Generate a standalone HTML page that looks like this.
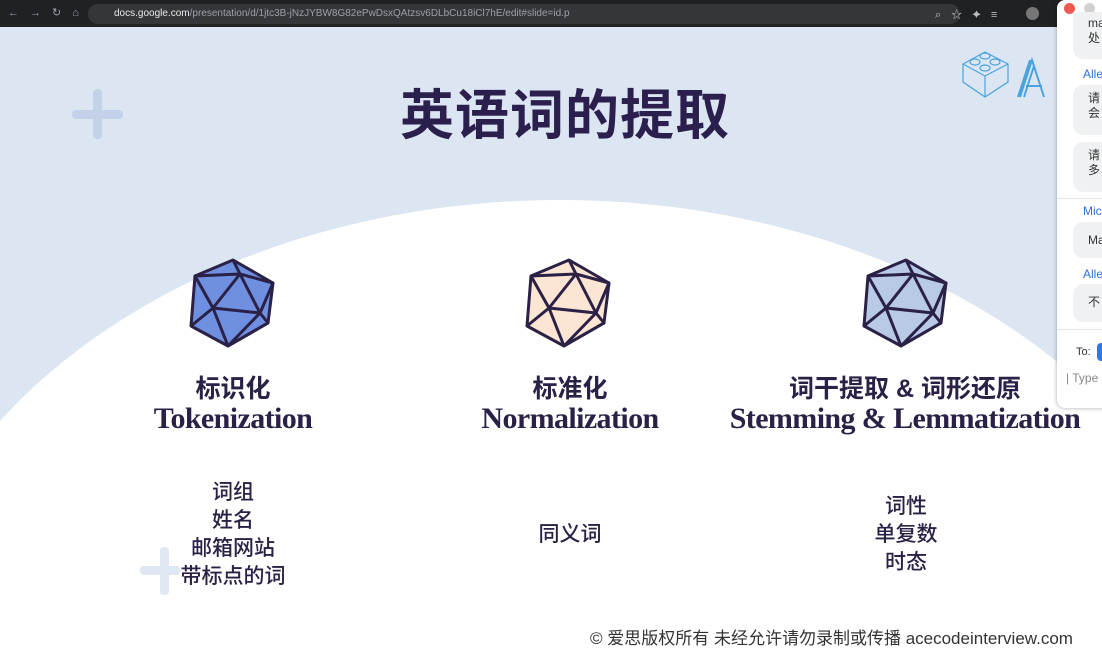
<!DOCTYPE html>
<html><head><meta charset="utf-8"><style>
*{margin:0;padding:0;box-sizing:border-box}
body{width:1102px;height:657px;overflow:hidden;position:relative;background:#fff;font-family:"Liberation Sans","Noto Sans CJK SC",sans-serif}
.bar{position:absolute;left:0;top:0;width:1102px;height:27px;background:#202124}
.url{position:absolute;left:88px;top:4px;width:872px;height:20px;border-radius:10px;background:#35363a;color:#9aa0a6;font-size:10px;line-height:20px;padding-left:26px;white-space:nowrap}
.url b{color:#e8eaed;font-weight:normal}
.slide{position:absolute;left:0;top:27px;width:1102px;height:630px;background:#dce6f3;overflow:hidden}
.arc{position:absolute;left:-115px;top:173px;width:1350px;height:1000px;border-radius:50%;background:#fff}
.t{position:absolute;color:#2b2146;text-align:center;font-family:"Liberation Sans","Noto Sans CJK SC",sans-serif;white-space:nowrap}
.en{font-family:"Liberation Serif","Noto Serif CJK SC",serif;font-weight:bold;font-size:30px;letter-spacing:-0.6px}
.cn{font-size:25px;font-weight:bold}
.sub{font-size:21px;line-height:28px;color:#2b2146;font-weight:500}
.chat{position:absolute;left:1057px;top:0;width:60px;height:408px;background:#fff;border-radius:8px 0 0 8px;box-shadow:0 0 4px rgba(0,0,0,.35);font-size:12px;overflow:hidden}
.bub{position:absolute;left:16px;width:60px;background:#f0f1f3;border-radius:10px;font-size:12px;color:#333;padding:6px 0 0 15px;line-height:15px}
.nm{position:absolute;left:26px;color:#2f6fd8;font-size:12px}
</style></head><body>
<div class="bar"><div style="position:absolute;left:8px;top:6px;color:#9aa0a6;font-size:11px;letter-spacing:11px">←→↻⌂</div>
<div class="url"><b>docs.google.com</b>/presentation/d/1jtc3B-jNzJYBW8G82ePwDsxQAtzsv6DLbCu18iCl7hE/edit#slide=id.p</div>
<div style="position:absolute;left:935px;top:6px;color:#bbb;font-size:11px;letter-spacing:10px">⌕☆✦≡</div>
<div style="position:absolute;left:1026px;top:7px;width:13px;height:13px;border-radius:50%;background:#777"></div></div>
<div class="slide">
<div class="arc"></div>
<div style="position:absolute;left:93px;top:62px;width:9px;height:50px;background:#c3d2e8;border-radius:4px"></div>
<div style="position:absolute;left:72px;top:83px;width:51px;height:9px;background:#c3d2e8;border-radius:4px"></div>
<div style="position:absolute;left:160px;top:520px;width:9px;height:48px;background:#dfe7f2;border-radius:4px"></div>
<div style="position:absolute;left:140px;top:539px;width:40px;height:9px;background:#dfe7f2;border-radius:4px"></div>
<svg style="position:absolute;left:960px;top:15px" width="90" height="60" viewBox="0 0 90 60" fill="none" stroke="#4aa3df" stroke-width="1.2"><path d="M3 22 L25 10 L48 22 L48 40 L25 55 L3 40Z M3 22 L25 34 L48 22 M25 34 L25 55"/><ellipse cx="25" cy="14" rx="5" ry="3"/><ellipse cx="15" cy="20" rx="5" ry="3"/><ellipse cx="35" cy="20" rx="5" ry="3"/><ellipse cx="25" cy="26" rx="5" ry="3"/><path d="M60 55 L72 18 L84 55 M58 55 L70 18 M64 55 L74 24 M66 44 L82 44" stroke-width="2"/></svg>
<div class="t" style="left:300px;top:44px;width:530px;font-size:54px;font-weight:bold;letter-spacing:1px;color:#2b1f4d">英语词的提取</div>

<svg style="position:absolute;left:188px;top:231px" width="92" height="92" viewBox="0 0 92 92"><g stroke="#2b2146" stroke-width="3" stroke-linejoin="round" fill="#6f8fe0"><path d="M45 2 L85 25 L80 65 L40 88 L3 68 L7 18Z"/><path fill="none" d="M52 16 L25 50 L72 55Z M45 2 L52 16 L85 25 L72 55 L80 65 L40 88 L72 55 M40 88 L25 50 L3 68 M25 50 L7 18 L52 16"/></g></svg>
<svg style="position:absolute;left:524px;top:231px" width="92" height="92" viewBox="0 0 92 92"><g stroke="#2b2146" stroke-width="3" stroke-linejoin="round" fill="#fce5d3"><path d="M45 2 L85 25 L80 65 L40 88 L3 68 L7 18Z"/><path fill="none" d="M52 16 L25 50 L72 55Z M45 2 L52 16 L85 25 L72 55 L80 65 L40 88 L72 55 M40 88 L25 50 L3 68 M25 50 L7 18 L52 16"/></g></svg>
<svg style="position:absolute;left:861px;top:231px" width="92" height="92" viewBox="0 0 92 92"><g stroke="#2b2146" stroke-width="3" stroke-linejoin="round" fill="#b8cae6"><path d="M45 2 L85 25 L80 65 L40 88 L3 68 L7 18Z"/><path fill="none" d="M52 16 L25 50 L72 55Z M45 2 L52 16 L85 25 L72 55 L80 65 L40 88 L72 55 M40 88 L25 50 L3 68 M25 50 L7 18 L52 16"/></g></svg>

<div class="t cn" style="left:133px;top:342px;width:200px">标识化</div>
<div class="t en" style="left:103px;top:375px;width:260px">Tokenization</div>
<div class="t cn" style="left:470px;top:342px;width:200px">标准化</div>
<div class="t en" style="left:430px;top:375px;width:280px">Normalization</div>
<div class="t cn" style="left:730px;top:342px;width:350px">词干提取 &amp; 词形还原</div>
<div class="t en" style="left:680px;top:375px;width:450px">Stemming &amp; Lemmatization</div>

<div class="t sub" style="left:133px;top:452px;width:200px">词组<br>姓名<br>邮箱网站<br>带标点的词</div>
<div class="t sub" style="left:470px;top:494px;width:200px">同义词</div>
<div class="t sub" style="left:806px;top:466px;width:200px">词性<br>单复数<br>时态</div>
<div class="t" style="left:590px;top:597px;width:520px;text-align:left;font-size:17px;color:#333;white-space:nowrap;overflow:hidden">© 爱思版权所有 未经允许请勿录制或传播 acecodeinterview.com</div>
</div>
<div class="chat">
<div style="position:absolute;left:7px;top:3px;width:11px;height:11px;border-radius:50%;background:#ee5a52"></div>
<div style="position:absolute;left:27px;top:3px;width:11px;height:11px;border-radius:50%;background:#d0d0d0"></div>
<div class="bub" style="top:12px;height:47px;border-radius:0 0 10px 10px;padding-top:4px">ma<br>处</div>
<div class="nm" style="top:67px">Alle</div>
<div class="bub" style="top:85px;height:50px">请<br>会</div>
<div class="bub" style="top:142px;height:50px">请<br>多</div>
<div style="position:absolute;left:0;top:198px;width:60px;height:1px;background:#e4e4e4"></div>
<div class="nm" style="top:204px">Mic</div>
<div class="bub" style="top:222px;height:36px;padding-top:11px">Ma</div>
<div class="nm" style="top:267px">Alle</div>
<div class="bub" style="top:284px;height:38px;padding-top:11px">不</div>
<div style="position:absolute;left:0;top:329px;width:60px;height:1px;background:#e4e4e4"></div>
<div style="position:absolute;left:19px;top:346px;color:#333;font-size:11px">To:</div>
<div style="position:absolute;left:40px;top:343px;width:20px;height:18px;border-radius:4px;background:#2f7ae0"></div>
<div style="position:absolute;left:9px;top:371px;color:#888;font-size:12px">| Type</div>
</div>
</body></html>
